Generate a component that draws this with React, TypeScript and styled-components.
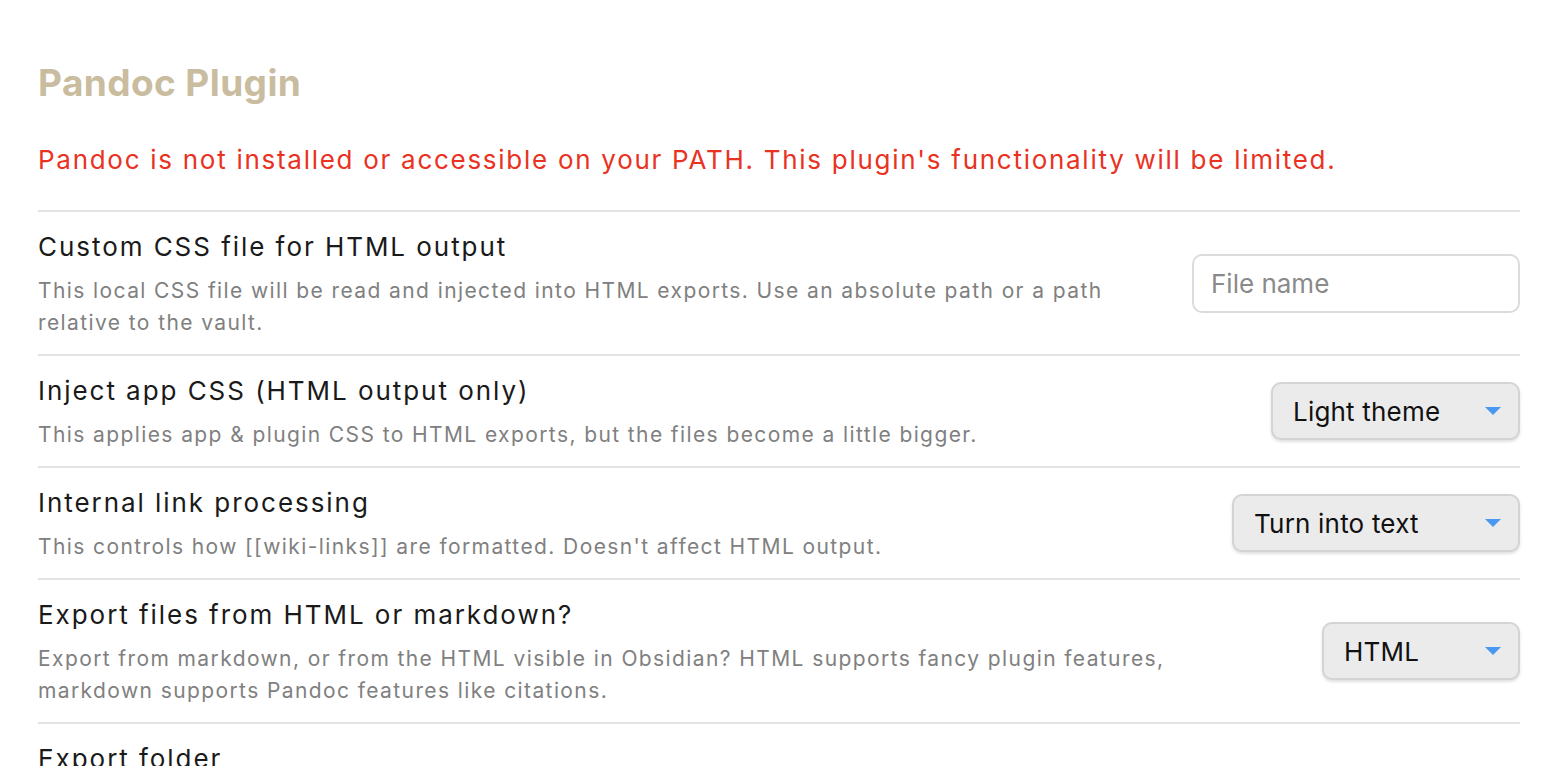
import React from "react";
import styled, { createGlobalStyle } from "styled-components";

const GlobalStyle = createGlobalStyle`
  html, body { margin: 0; padding: 0; background: #ffffff; }
  body { font-family: Inter, "Noto Sans", "Liberation Sans", sans-serif; -webkit-font-smoothing: antialiased; }
  * { box-sizing: border-box; }
`;

const Page = styled.div`
  width: 1564px;
  height: 766px;
  overflow: hidden;
  padding: 56px 44px 0 38px;
  background: #ffffff;
`;

const Title = styled.h2`
  margin: 0;
  font-size: 37px;
  line-height: 54px;
  font-weight: 700;
  color: #c9bc9f;
  letter-spacing: 0.4px;
`;

const ErrorText = styled.p`
  margin: 31px 0 0 0;
  font-size: 26px;
  line-height: 38px;
  letter-spacing: 1.72px;
  color: #e9321f;
  padding-bottom: 31px;
  border-bottom: 2px solid #e3e3e3;
`;

const Row = styled.div`
  display: flex;
  align-items: center;
  justify-content: space-between;
  gap: 40px;
  padding: 15px 0 15px 0;
  border-bottom: 2px solid #e3e3e3;
`;

const Info = styled.div`
  display: flex;
  flex-direction: column;
  gap: 11px;
  padding-top: 3px;
  max-width: 1150px;
`;

const Name = styled.div`
  font-size: 26px;
  line-height: 34px;
  letter-spacing: 1.95px;
  color: #1a1a1a;
`;

const Desc = styled.div`
  font-size: 21px;
  line-height: 32px;
  letter-spacing: 1.4px;
  color: #808080;
`;

const TextInput = styled.input<{ $w: number }>`
  flex: none;
  width: ${(p) => p.$w}px;
  height: 59px;
  border: 2px solid #dcdcdc;
  border-radius: 10px;
  padding: 0 17px;
  font-family: inherit;
  font-size: 26px;
  color: #222;
  background: #fff;
  outline: none;
  &::placeholder { color: #8a8a8a; }
`;

const Select = styled.div<{ $w: number }>`
  flex: none;
  width: ${(p) => p.$w}px;
  height: 58px;
  display: flex;
  align-items: center;
  justify-content: space-between;
  padding: 0 17px 0 20px;
  background: #ebebeb;
  border: 2px solid #d4d4d4;
  border-radius: 10px;
  box-shadow: 0 2px 3px rgba(0, 0, 0, 0.12);
  font-size: 26px;
  letter-spacing: 0.2px;
  color: #111;
`;

const Arrow = styled.svg`
  width: 16px;
  height: 8px;
  flex: none;
`;

type Item = {
  name: string;
  desc: React.ReactNode;
  control: React.ReactNode;
};

const Dropdown = ({ label, w }: { label: string; w: number }) => (
  <Select $w={w}>
    <span>{label}</span>
    <Arrow viewBox="0 0 16 8">
      <path d="M0 0 L16 0 L8 8 Z" fill="#4a97f0" />
    </Arrow>
  </Select>
);

const items: Item[] = [
  {
    name: "Custom CSS file for HTML output",
    desc: (
      <>
        This local CSS file will be read and injected into HTML exports. Use an absolute path or a path
        <br />
        relative to the vault.
      </>
    ),
    control: <TextInput $w={328} placeholder="File name" />,
  },
  {
    name: "Inject app CSS (HTML output only)",
    desc: "This applies app & plugin CSS to HTML exports, but the files become a little bigger.",
    control: <Dropdown label="Light theme" w={249} />,
  },
  {
    name: "Internal link processing",
    desc: "This controls how [[wiki-links]] are formatted. Doesn't affect HTML output.",
    control: <Dropdown label="Turn into text" w={288} />,
  },
  {
    name: "Export files from HTML or markdown?",
    desc: (
      <>
        Export from markdown, or from the HTML visible in Obsidian? HTML supports fancy plugin features,
        <br />
        markdown supports Pandoc features like citations.
      </>
    ),
    control: <Dropdown label="HTML" w={198} />,
  },
  {
    name: "Export folder",
    desc: (
      <>
        Absolute path to an export folder, like 'C:\Users\Example\Documents' or
        <br />
        '/home/user/zettelkasten'. If left blank, files are saved next to where they were exported from.
      </>
    ),
    control: <Dropdown label="Same as target" w={324} />,
  },
];

export default function App() {
  return (
    <>
      <GlobalStyle />
      <Page>
        <Title>Pandoc Plugin</Title>
        <ErrorText>
          Pandoc is not installed or accessible on your PATH. This plugin's functionality will be limited.
        </ErrorText>
        {items.map((it) => (
          <Row key={it.name}>
            <Info>
              <Name>{it.name}</Name>
              <Desc>{it.desc}</Desc>
            </Info>
            {it.control}
          </Row>
        ))}
      </Page>
    </>
  );
}
